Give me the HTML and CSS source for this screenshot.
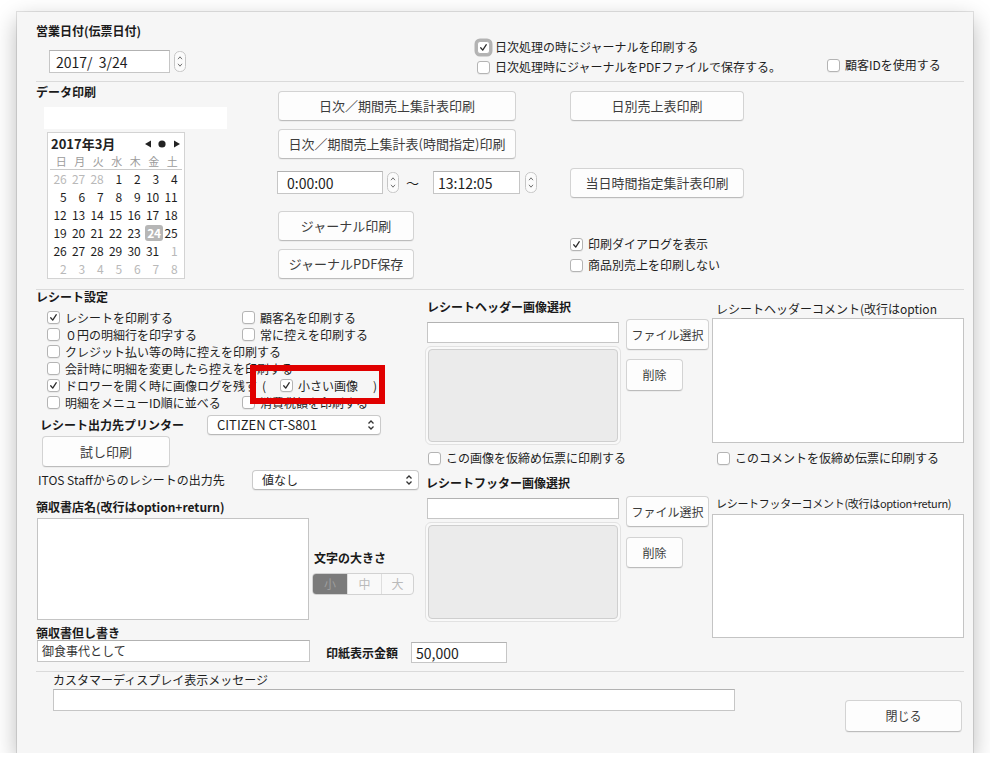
FILE: index.html
```html
<!DOCTYPE html>
<html lang="ja">
<head>
<meta charset="utf-8">
<title>設定</title>
<link rel="stylesheet" href="styles.css">
</head>
<body>
<div class="window">

  <!-- Section A -->
  <div class="sec-a">
    <div class="a-left">
      <div class="lbl b a-title">営業日付(伝票日付)</div>
      <div class="date-row">
        <div class="field date-field">2017/&nbsp;&nbsp;3/24</div>
        <svg class="stepper" width="12" height="21" viewBox="0 0 12 21"><rect x="0.5" y="0.5" width="11" height="20" rx="5" fill="#fbfbfb" stroke="#c6c6c6"/><path d="M4 8.2 L6 5.8 L8 8.2" fill="none" stroke="#707070" stroke-width="1"/><path d="M4 12.8 L6 15.2 L8 12.8" fill="none" stroke="#707070" stroke-width="1"/></svg>
      </div>
    </div>
    <div class="a-mid">
      <label class="cb"><span class="box focus"><svg viewBox="0 0 13 13"><path d="M3.2 6.8 L5.6 9.6 L9.8 3.2"/></svg></span><span>日次処理の時にジャーナルを印刷する</span></label>
      <label class="cb"><span class="box"></span><span>日次処理時にジャーナルをPDFファイルで保存する。</span></label>
    </div>
    <div class="a-right">
      <label class="cb"><span class="box"></span><span>顧客IDを使用する</span></label>
    </div>
  </div>
  <div class="sep"></div>

  <!-- Section B -->
  <div class="sec-b">
    <div class="b-left">
      <div class="lbl b b-title">データ印刷</div>
      <div class="white-rect"></div>
      <div class="cal">
        <div class="cal-head">
          <span class="cal-month">2017年3月</span>
          <svg class="cal-nav" width="35" height="8" viewBox="0 0 35 8"><polygon points="0,4 6,0.5 6,7.5" fill="#222"/><circle cx="17" cy="4" r="3.6" fill="#222"/><polygon points="29,0.5 35,4 29,7.5" fill="#222"/></svg>
        </div>
        <div class="cal-names"><span>日</span><span>月</span><span>火</span><span>水</span><span>木</span><span>金</span><span>土</span></div>
        <div class="cal-line"></div>
        <div class="cal-grid">
          <span class="f">26</span><span class="f">27</span><span class="f">28</span><span>1</span><span>2</span><span>3</span><span>4</span>
          <span>5</span><span>6</span><span>7</span><span>8</span><span>9</span><span>10</span><span>11</span>
          <span>12</span><span>13</span><span>14</span><span>15</span><span>16</span><span>17</span><span>18</span>
          <span>19</span><span>20</span><span>21</span><span>22</span><span>23</span><span class="sel">24</span><span>25</span>
          <span>26</span><span>27</span><span>28</span><span>29</span><span>30</span><span>31</span><span class="f">1</span>
          <span class="f">2</span><span class="f">3</span><span class="f">4</span><span class="f">5</span><span class="f">6</span><span class="f">7</span><span class="f">8</span>
        </div>
      </div>
    </div>
    <div class="b-mid">
      <div class="btn bbtn w238">日次／期間売上集計表印刷</div>
      <div class="btn bbtn w238 mt8">日次／期間売上集計表(時間指定)印刷</div>
      <div class="time-row">
        <div class="field time1">0:00:00</div>
        <svg class="stepper st1" width="12" height="21" viewBox="0 0 12 21"><rect x="0.5" y="0.5" width="11" height="20" rx="5" fill="#fbfbfb" stroke="#c6c6c6"/><path d="M4 8.2 L6 5.8 L8 8.2" fill="none" stroke="#707070" stroke-width="1"/><path d="M4 12.8 L6 15.2 L8 12.8" fill="none" stroke="#707070" stroke-width="1"/></svg>
        <span class="tilde">〜</span>
        <div class="field time2">13:12:05</div>
        <svg class="stepper st2" width="12" height="21" viewBox="0 0 12 21"><rect x="0.5" y="0.5" width="11" height="20" rx="5" fill="#fbfbfb" stroke="#c6c6c6"/><path d="M4 8.2 L6 5.8 L8 8.2" fill="none" stroke="#707070" stroke-width="1"/><path d="M4 12.8 L6 15.2 L8 12.8" fill="none" stroke="#707070" stroke-width="1"/></svg>
      </div>
      <div class="btn bbtn w136 mt17">ジャーナル印刷</div>
      <div class="btn bbtn w136 mt8">ジャーナルPDF保存</div>
    </div>
    <div class="b-right">
      <div class="btn bbtn w174">日別売上表印刷</div>
      <div class="btn bbtn w174 mt47">当日時間指定集計表印刷</div>
      <div class="b-cbs">
        <label class="cb"><span class="box"><svg viewBox="0 0 13 13"><path d="M3.2 6.8 L5.6 9.6 L9.8 3.2"/></svg></span><span>印刷ダイアログを表示</span></label>
        <label class="cb"><span class="box"></span><span>商品別売上を印刷しない</span></label>
      </div>
    </div>
  </div>
  <div class="sep"></div>

  <!-- Section C -->
  <div class="sec-c">
    <div class="c-left">
      <div class="lbl b c-title">レシート設定</div>
      <div class="cbgrid">
        <label class="cb"><span class="box"><svg viewBox="0 0 13 13"><path d="M3.2 6.8 L5.6 9.6 L9.8 3.2"/></svg></span><span>レシートを印刷する</span></label>
        <label class="cb"><span class="box"></span><span>顧客名を印刷する</span></label>
        <label class="cb"><span class="box"></span><span>０円の明細行を印字する</span></label>
        <label class="cb"><span class="box"></span><span>常に控えを印刷する</span></label>
        <label class="cb span2"><span class="box"></span><span>クレジット払い等の時に控えを印刷する</span></label>
        <label class="cb span2"><span class="box"></span><span>会計時に明細を変更したら控えを印刷する</span></label>
        <div class="span2 drawer">
          <label class="cb"><span class="box"><svg viewBox="0 0 13 13"><path d="M3.2 6.8 L5.6 9.6 L9.8 3.2"/></svg></span><span>ドロワーを開く時に画像ログを残す</span></label>
          <span class="paren po">(</span>
          <label class="cb small-img"><span class="box"><svg viewBox="0 0 13 13"><path d="M3.2 6.8 L5.6 9.6 L9.8 3.2"/></svg></span><span>小さい画像</span></label>
          <span class="paren pc">)</span>
        </div>
        <label class="cb"><span class="box"></span><span>明細をメニューID順に並べる</span></label>
        <label class="cb"><span class="box"></span><span>消費税額を印刷する</span></label>
      </div>
      <div class="printer-row">
        <span class="lbl b plbl">レシート出力先プリンター</span>
        <div class="popup w174">
          <span>CITIZEN CT-S801</span>
          <svg width="8" height="12" viewBox="0 0 8 12"><path d="M1.5 4.5 L4 2 L6.5 4.5 M1.5 7.5 L4 10 L6.5 7.5" fill="none" stroke="#333" stroke-width="1.3"/></svg>
        </div>
      </div>
      <div class="btn test-btn">試し印刷</div>
      <div class="itos-row">
        <span class="ilbl">ITOS Staffからのレシートの出力先</span>
        <div class="popup w167 small">
          <span>値なし</span>
          <svg width="8" height="12" viewBox="0 0 8 12"><path d="M1.5 4.5 L4 2 L6.5 4.5 M1.5 7.5 L4 10 L6.5 7.5" fill="none" stroke="#333" stroke-width="1.3"/></svg>
        </div>
      </div>
      <div class="lbl b shop-title">領収書店名(改行はoption+return)</div>
      <div class="shop-row">
        <div class="area shop-area"></div>
        <div class="size-col">
          <div class="lbl b size-title">文字の大きさ</div>
          <div class="seg"><span class="on s1">小</span><span class="s2">中</span><span class="s3">大</span></div>
        </div>
      </div>
      <div class="lbl b tada-title">領収書但し書き</div>
      <div class="tada-row">
        <div class="field tada-field">御食事代として</div>
        <span class="lbl b stamp-lbl">印紙表示金額</span>
        <div class="field amount">50,000</div>
      </div>
    </div>

    <div class="c-mid">
      <div class="lbl b mid-title">レシートヘッダー画像選択</div>
      <div class="img-row">
        <div class="img-left">
          <div class="field img-field"></div>
          <div class="well"><div class="well-in"></div></div>
        </div>
        <div class="img-btns">
          <div class="btn fsel">ファイル選択</div>
          <div class="btn del">削除</div>
        </div>
      </div>
      <label class="cb mid-cb"><span class="box"></span><span>この画像を仮締め伝票に印刷する</span></label>
      <div class="lbl b foot-title">レシートフッター画像選択</div>
      <div class="img-row foot">
        <div class="img-left">
          <div class="field img-field"></div>
          <div class="well"><div class="well-in"></div></div>
        </div>
        <div class="img-btns">
          <div class="btn fsel">ファイル選択</div>
          <div class="btn del">削除</div>
        </div>
      </div>
    </div>

    <div class="c-right">
      <div class="lbl hc-title">レシートヘッダーコメント(改行はoption</div>
      <div class="area hc-area"></div>
      <label class="cb right-cb"><span class="box"></span><span>このコメントを仮締め伝票に印刷する</span></label>
      <div class="fc-title">レシートフッターコメント(改行はoption+return)</div>
      <div class="area fc-area"></div>
    </div>
  </div>
  <div class="sep"></div>

  <!-- Section D -->
  <div class="sec-d">
    <div class="d-left">
      <div class="lbl">カスタマーディスプレイ表示メッセージ</div>
      <div class="field msg-field"></div>
    </div>
    <div class="btn close-btn">閉じる</div>
  </div>

  <div class="mark"></div>
</div>
</body>
</html>
```

FILE: styles.css
```css
html, body {
  margin: 0;
  padding: 0;
  background: #ffffff;
}
body {
  font-family: "Noto Sans CJK JP", "Noto Sans", sans-serif;
  font-size: 12px;
  line-height: 16px;
  color: #1e1e1e;
}
.window {
  position: relative;
  margin: 12px 0 0 17px;
  width: 956px;
  height: 741px;
  box-sizing: border-box;
  padding: 0 9px 0 19px;
  background: #f6f6f6;
  box-shadow: 0 0 0 1px rgba(0,0,0,0.10), 0 8px 22px rgba(0,0,0,0.28);
}
.sep {
  height: 0;
  border-top: 1px solid #dadada;
}
.lbl { line-height: 16px; white-space: nowrap; }
.b { font-weight: 700; color: #1a1a1a; }

/* checkbox */
.cb {
  display: inline-flex;
  align-items: center;
  gap: 5px;
  white-space: nowrap;
  line-height: 17px;
}
.box {
  flex: none;
  width: 13px;
  height: 13px;
  box-sizing: border-box;
  border: 1px solid #b4b4b4;
  border-radius: 3px;
  background: #ffffff;
  box-shadow: 0 1px 0 rgba(0,0,0,0.05);
  display: flex;
}
.box svg {
  width: 11px;
  height: 11px;
}
.box svg path {
  fill: none;
  stroke: #2c2c2c;
  stroke-width: 1.5;
  stroke-linecap: round;
  stroke-linejoin: round;
}
.box.focus {
  box-shadow: 0 0 0 2.5px #b3b3b3;
}

/* fields */
.field {
  box-sizing: border-box;
  flex: none;
  background: #ffffff;
  border: 1px solid #c6c6c6;
  border-top-color: #b2b2b2;
  display: flex;
  align-items: center;
  white-space: nowrap;
}
.area {
  box-sizing: border-box;
  flex: none;
  background: #ffffff;
  border: 1px solid #c4c4c4;
}
.btn {
  box-sizing: border-box;
  flex: none;
  display: flex;
  align-items: center;
  justify-content: center;
  background: #fdfdfd;
  border: 1px solid #d3d3d3;
  border-bottom-color: #bcbcbc;
  border-radius: 4px;
  box-shadow: 0 1px 0 rgba(0,0,0,0.04);
  color: #3c3c3c;
  font-size: 12px;
  white-space: nowrap;
}
.stepper { display: block; flex: none; }

/* Section A */
.sec-a {
  height: 69px;
  display: grid;
  grid-template-columns: 441px 350px 1fr;
}
.a-title { margin-top: 11px; }
.date-row {
  margin-top: 11px;
  margin-left: 13px;
  display: flex;
  align-items: center;
}
.date-field {
  width: 121px;
  height: 23px;
  padding-left: 6px;
  font-size: 14px;
}
.date-row .stepper { margin-left: 4px; }
.a-mid {
  padding-top: 26px;
  display: flex;
  flex-direction: column;
  gap: 2px;
}
.a-mid .cb, .a-right .cb { line-height: 18px; }
.a-right { padding-top: 44px; }

/* Section B */
.sec-b {
  height: 207px;
  display: flex;
}
.b-left { width: 242px; flex: none; }
.b-title { margin-top: 2px; }
.white-rect {
  margin-top: 7px;
  margin-left: 8px;
  width: 183px;
  height: 22px;
  background: #ffffff;
}
.cal {
  margin-top: 3px;
  margin-left: 11px;
  width: 138px;
  height: 147px;
  box-sizing: border-box;
  border: 1px solid #d3d3d3;
  background: #ffffff;
}
.cal-head {
  height: 21px;
  display: flex;
  align-items: center;
  justify-content: space-between;
  padding: 0 4px 0 3px;
}
.cal-month {
  font-weight: 700;
  font-size: 13px;
  color: #222;
}
.cal-nav { display: block; }
.cal-names {
  height: 15px;
  margin-left: 4px;
  display: grid;
  grid-template-columns: repeat(7, 18.5px);
  font-size: 11px;
  line-height: 15px;
  color: #9b9b9b;
  text-align: center;
}
.cal-line {
  margin: 0 2px;
  border-top: 1px solid #c9c9c9;
}
.cal-grid {
  margin-left: 4px;
  display: grid;
  grid-template-columns: repeat(7, 18.5px);
  grid-auto-rows: 18px;
  font-size: 12px;
  line-height: 18px;
  color: #1e1e1e;
  letter-spacing: -0.2px;
}
.cal-grid span {
  text-align: right;
  padding-right: 4px;
}
.cal-grid .f { color: #b9b9b9; }
.cal-grid .sel {
  margin: 1px 0;
  line-height: 16px;
  background: #b6b6b6;
  color: #ffffff;
  border-radius: 3px;
  font-weight: 700;
  padding-right: 2px;
}

.b-mid {
  width: 292px;
  flex: none;
  padding-top: 9px;
}
.b-right { padding-top: 9px; }
.bbtn {
  height: 30px;
  font-size: 13px;
}
.w238 { width: 238px; }
.w174 { width: 174px; }
.w136 { width: 136px; }
.mt8 { margin-top: 8px; }
.mt17 { margin-top: 17px; }
.mt47 { margin-top: 47px; }
.time-row {
  margin-top: 12px;
  margin-left: -1px;
  height: 23px;
  display: flex;
  align-items: center;
}
.time1 {
  width: 106px;
  height: 23px;
  padding-left: 9px;
  font-size: 14px;
}
.st1 { margin-left: 4px; }
.tilde {
  margin-left: 7px;
  width: 13px;
  font-size: 13px;
  line-height: 16px;
}
.time2 {
  margin-left: 14px;
  width: 87px;
  height: 23px;
  padding-left: 4px;
  font-size: 14px;
}
.st2 { margin-left: 5px; }
.b-cbs {
  margin-top: 36px;
  display: flex;
  flex-direction: column;
  gap: 1px;
}
.b-cbs .cb { line-height: 20px; }

/* Section C */
.sec-c {
  height: 381px;
  display: grid;
  grid-template-columns: 390px 286px 252px;
}
.c-title { line-height: 14px; }
.cbgrid {
  margin-top: 5px;
  padding-left: 11px;
  display: grid;
  grid-template-columns: 195px auto;
  grid-auto-rows: 17px;
}
.span2 { grid-column: 1 / span 2; }
.drawer {
  display: flex;
  align-items: center;
  line-height: 17px;
}
.paren { line-height: 17px; }
.po { margin-left: 5px; }
.small-img { margin-left: 14px; }
.pc { margin-left: 15px; }
.printer-row {
  margin-top: 3px;
  height: 21px;
  display: flex;
  align-items: center;
}
.plbl {
  flex: none;
  margin-left: 4px;
  width: 167px;
}
.popup {
  box-sizing: border-box;
  flex: none;
  height: 20px;
  display: flex;
  align-items: center;
  justify-content: space-between;
  padding: 0 5px 0 9px;
  background: #ffffff;
  border: 1px solid #cacaca;
  border-bottom-color: #b9b9b9;
  border-radius: 4px;
  box-shadow: 0 1px 1px rgba(0,0,0,0.06);
  font-size: 13px;
  white-space: nowrap;
  color: #1e1e1e;
}
.popup svg { display: block; }
.popup.small { font-size: 12px; }
.w167 { width: 167px; }
.test-btn {
  margin-top: 1px;
  margin-left: 6px;
  width: 128px;
  height: 31px;
  font-size: 13px;
}
.itos-row {
  margin-top: 3px;
  height: 20px;
  display: flex;
  align-items: center;
}
.ilbl {
  flex: none;
  margin-left: 2px;
  width: 214px;
  white-space: nowrap;
  line-height: 16px;
}
.shop-title { margin-top: 9px; }
.shop-row {
  margin-top: 3px;
  display: flex;
  align-items: flex-start;
}
.shop-area {
  margin-left: 1px;
  width: 272px;
  height: 102px;
}
.size-col { flex: none; margin-left: 3px; }
.size-title {
  margin-top: 32px;
  padding-left: 2px;
}
.seg {
  margin-top: 7px;
  box-sizing: border-box;
  width: 102px;
  height: 22px;
  display: flex;
  border: 1px solid #d2d2d2;
  border-radius: 4px;
  overflow: hidden;
  background: #f9f9f9;
  font-size: 12px;
  color: #bababa;
}
.seg span {
  display: flex;
  align-items: center;
  justify-content: center;
}
.seg .s1 { width: 34px; }
.seg .s2 { width: 33px; border-left: 1px solid #dedede; }
.seg .s3 { flex: 1; border-left: 1px solid #dedede; }
.seg .on {
  background: #7b7b7b;
  color: #9e9e9e;
}
.tada-title {
  margin-top: 5px;
  line-height: 15px;
}
.tada-row {
  display: flex;
  align-items: flex-start;
  width: max-content;
}
.tada-field {
  margin-left: 1px;
  width: 273px;
  height: 22px;
  padding-left: 4px;
  color: #333;
}
.stamp-lbl {
  flex: none;
  margin-left: 16px;
  margin-top: 5px;
  width: 85px;
}
.amount {
  margin-top: 2px;
  width: 96px;
  height: 21px;
  padding-left: 4px;
  font-size: 14px;
}

.mid-title {
  margin-top: 9px;
  padding-left: 1px;
}
.img-row {
  margin-top: 3px;
  display: flex;
  align-items: flex-start;
}
.img-row.foot { margin-top: 4px; }
.img-left {
  flex: none;
  margin-left: -1px;
  width: 196px;
}
.img-field {
  margin-top: 4px;
  margin-left: 2px;
  width: 192px;
  height: 21px;
}
.foot .img-field { margin-top: 3px; }
.well {
  margin-top: 3px;
  box-sizing: border-box;
  width: 196px;
  height: 99px;
  padding: 2px;
  border: 1px solid #e2e2e2;
  border-radius: 6px;
  background: #f9f9f9;
}
.foot .well { height: 100px; }
.well-in {
  box-sizing: border-box;
  height: 100%;
  background: #ebebeb;
  border: 1px solid #cfcfcf;
  border-radius: 4px;
}
.img-btns { flex: none; margin-left: 5px; }
.fsel {
  margin-top: 1px;
  width: 83px;
  height: 31px;
}
.del {
  margin-top: 9px;
  width: 57px;
  height: 32px;
}
.foot .del {
  margin-top: 10px;
  height: 31px;
}
.mid-cb {
  display: flex;
  width: max-content;
  margin-top: 5px;
  padding-left: 2px;
  line-height: 16px;
}
.foot-title { margin-top: 9px; }

.hc-title {
  margin-top: 11px;
  padding-left: 4px;
  color: #1e1e1e;
  overflow: hidden;
}
.hc-area {
  margin-top: 1px;
  width: 252px;
  height: 125px;
}
.right-cb {
  display: flex;
  width: max-content;
  margin-top: 7px;
  padding-left: 5px;
  line-height: 16px;
}
.fc-title {
  margin-top: 30px;
  padding-left: 4px;
  font-size: 11px;
  line-height: 14px;
  letter-spacing: -0.3px;
  white-space: nowrap;
}
.fc-area {
  margin-top: 4px;
  width: 252px;
  height: 124px;
}

/* Section D */
.sec-d {
  display: flex;
  align-items: flex-start;
}
.d-left { padding-left: 17px; }
.msg-field {
  margin-top: 1px;
  width: 682px;
  height: 22px;
}
.close-btn {
  margin-top: 28px;
  margin-left: auto;
  margin-right: 2px;
  width: 117px;
  height: 32px;
}

/* annotation overlay */
.mark {
  position: absolute;
  left: 233px;
  top: 353px;
  width: 135px;
  height: 39px;
  box-sizing: border-box;
  border: 6px solid #e00000;
}
```
